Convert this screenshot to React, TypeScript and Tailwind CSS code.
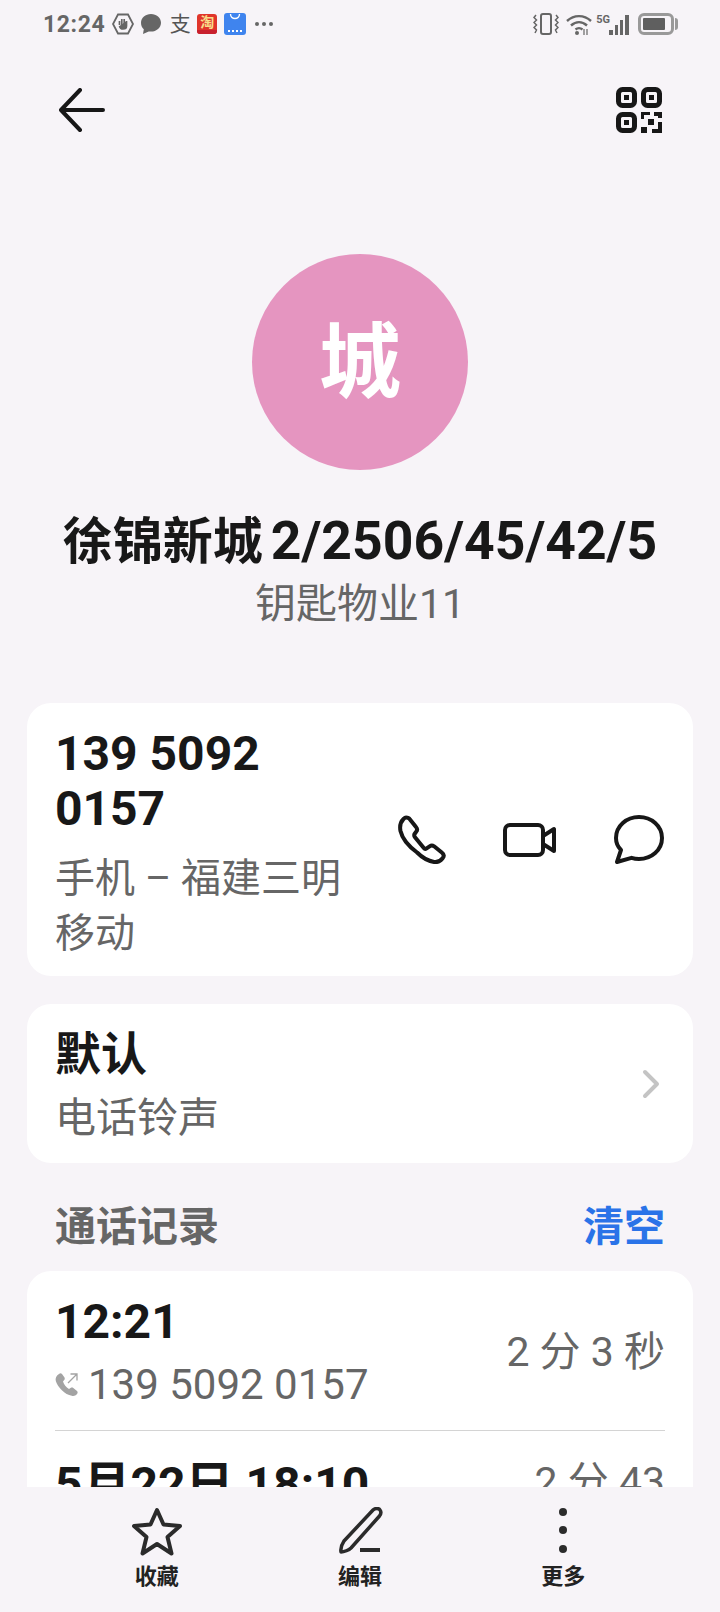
const font = { fontFamily: 'Roboto, "Noto Sans CJK SC", sans-serif' };

function StatusBar() {
  return (
    <div className="flex h-12 items-center justify-between pl-[43px] pr-[42px] text-[#666]">
      <div className="flex items-center gap-[7px]">
        <span className="text-[23px] font-bold leading-none tracking-[0.6px]">12:24</span>
        <svg width="22" height="22" viewBox="0 0 22 22" fill="none" stroke="#666" strokeWidth="1.800">
          <path d="M6 1.500h10l5 9.500-5 9.500H6L1 11z" />
          <path d="M7.500 8v4M9.800 6v6M12.200 6v6M14.500 8v5c0 2-1.500 3-3.500 3s-3-1-3.500-3" strokeWidth="1.700" fill="#666" />
        </svg>
        <svg width="20" height="20" viewBox="0 0 20 20" fill="#666">
          <path d="M10 0c5.500 0 10 3.800 10 8.800s-4.500 8.800-10 8.800c-.8 0-1.600-.1-2.300-.2L2 20l.8-4.700C1 13.700 0 11.400 0 8.800 0 3.800 4.500 0 10 0z" />
        </svg>
        <span className="ml-[1px] w-[22px] text-center text-[21px] leading-none text-[#555]">支</span>
        <div className="-ml-[1px] flex h-[20px] w-[20px] flex-col items-center justify-between overflow-hidden rounded-[3px] bg-[#e0352b] pt-[1px] text-[14px] font-bold leading-none text-[#f9dc8a]">
          淘
          <div className="h-[4px] w-full bg-[#c8202e]" />
        </div>
        <div className="flex h-[22px] w-[22px] flex-col items-center justify-between rounded-[3px] bg-[#3f84ee] pb-[3px]">
          <svg width="12" height="8" viewBox="0 0 12 8" fill="none" stroke="#fff" strokeWidth="1.400">
            <path d="M1.500 1c0 6 9 6 9 0" />
          </svg>
          <div className="flex gap-[2px]">
            <span className="h-[2px] w-[2px] bg-white" />
            <span className="h-[2px] w-[2px] bg-white" />
            <span className="h-[2px] w-[2px] bg-white" />
            <span className="h-[2px] w-[2px] bg-white" />
          </div>
        </div>
        <div className="ml-[2px] flex gap-[3px]">
          <span className="h-[4px] w-[4px] rounded-full bg-[#666]" />
          <span className="h-[4px] w-[4px] rounded-full bg-[#666]" />
          <span className="h-[4px] w-[4px] rounded-full bg-[#666]" />
        </div>
      </div>
      <div className="flex items-center">
        <svg width="26" height="22" viewBox="0 0 26 22" fill="none" stroke="#666" strokeWidth="2">
          <rect x="8" y="1" width="10" height="20" rx="2" />
          <path d="M3 2L1 4.500l2.500 2.500L1 9.500 3.500 12 1 14.500 3.500 17 2 20M23 2l2 2.500L22.500 7 25 9.500 22.500 12l2.500 2.500L22.500 17l1.500 3" strokeWidth="1.500" />
        </svg>
        <svg className="ml-[7px]" width="26" height="21" viewBox="0 0 26 21" fill="none" stroke="#666" strokeWidth="2.400">
          <path d="M1 7c7-6.500 17-6.500 24 0M5 11.500c5-4.500 11-4.500 16 0M9.500 15.500c2-1.700 5-1.700 7 0" />
          <circle cx="11" cy="19" r="2" fill="#666" stroke="none" />
          <path d="M18 15v6M21 15v6" strokeWidth="1.200" />
        </svg>
        <div className="ml-[4px] flex items-end">
          <span className="mb-[10px] text-[11px] font-bold leading-none">5G</span>
          <div className="-ml-px flex items-end gap-[2px]">
            <span className="h-[5px] w-[4px] bg-[#666]" />
            <span className="h-[10px] w-[3px] bg-[#666]" />
            <span className="h-[15px] w-[3px] bg-[#666]" />
            <span className="h-[20px] w-[4px] bg-[#666]" />
          </div>
        </div>
        <div className="ml-[9px] flex items-center gap-[1px]">
          <div className="flex h-[22px] w-[36px] items-center rounded-[6px] border-[3px] border-[#999] p-[2px]">
            <div className="h-full w-[22px] rounded-[1px] bg-[#5f5f5f]" />
          </div>
          <span className="h-[12px] w-[3px] rounded-r-sm bg-[#999]" />
        </div>
      </div>
    </div>
  );
}

function TopBar() {
  return (
    <div className="flex h-[124px] items-center justify-between pl-[59px] pr-[58px]">
      <svg width="46" height="44" viewBox="0 0 46 44" fill="none" stroke="#171717" strokeWidth="4" strokeLinecap="round" strokeLinejoin="round">
        <path d="M44 22H3M21 2L2 22l19 20" />
      </svg>
      <svg width="46" height="46" viewBox="0 0 46 46" fill="none">
        <rect x="2.500" y="2.500" width="16" height="16" rx="4" stroke="#171717" strokeWidth="5" />
        <rect x="27.500" y="2.500" width="16" height="16" rx="4" stroke="#171717" strokeWidth="5" />
        <rect x="2.500" y="27.500" width="16" height="16" rx="4" stroke="#171717" strokeWidth="5" />
        <rect x="8" y="8" width="5" height="5" fill="#171717" />
        <rect x="33" y="8" width="5" height="5" fill="#171717" />
        <rect x="8" y="33" width="5" height="5" fill="#171717" />
        <path d="M25 32v-7h9v3h-6v4zM38 25h8v6h-4v-2h-4zM25 40h6v6h-6zM46 35v11h-10v-4h6v-7zM32 32h6v6h-6z" fill="#171717" />
      </svg>
    </div>
  );
}

function Card({ children, className }: { children: React.ReactNode; className: string }) {
  return <div className={"mx-[27px] rounded-[24px] bg-white " + className}>{children}</div>;
}

function OutgoingIcon() {
  return (
    <svg width="24" height="24" viewBox="0 0 24 24" fill="none">
      <path d="M4 1c1-1 2-1 3 0l2.500 3.500c.5 1 .3 2-.5 2.800L8 8.500c1 3 3 5.500 6 7.500l1.500-1c1-.6 2-.6 2.800 0l3.700 3c1 1 .8 2.300-.2 3.200-1.300 1.500-3 2-5 1.500C10 22 2.500 14 .8 8 0 5.300 1.500 2.500 4 1z" fill="#a3a3a3" />
      <path d="M13 10l9-9M15.500 1H22v6.500" stroke="#a3a3a3" strokeWidth="1.300" />
    </svg>
  );
}

export default function App() {
  return (
    <div className="flex h-[1612px] w-[720px] flex-col overflow-hidden bg-[#f7f4f8]" style={font}>
      <div className="min-h-0 flex-1 overflow-hidden">
        <StatusBar />
        <TopBar />

        <div className="mt-[82px] flex justify-center">
          <div className="flex h-[216px] w-[216px] items-center justify-center rounded-full bg-[#e595c0] pt-[2px] text-[82px] font-bold text-white">城</div>
        </div>
        <div className="mt-[35px] text-center text-[50px] font-bold leading-[72px] text-[#181818]">
          徐锦新城<span className="ml-[8px] text-[53.500px]">2/2506/45/42/5</span>
        </div>
        <div className="text-center text-[41px] leading-[52px] text-[#666]">钥匙物业11</div>

        <Card className="mt-[73px] flex h-[273px] items-center justify-between pl-[28px] pr-[29px]">
          <div className="w-[300px] self-start pt-[23px]">
            <div className="text-[48px] font-bold leading-[55px] text-[#181818]">139 5092 0157</div>
            <div className="mt-[15px] text-[40px] leading-[55px] text-[#666]">手机 – 福建三明移动</div>
          </div>
          <div className="flex items-center gap-[57px]">
            <svg width="49" height="49" viewBox="0 0 49 49" fill="none" stroke="#171717" strokeWidth="4" strokeLinejoin="round">
              <path d="M9 2.500c1.500 0 3 .5 4 2l6 7.500c1.500 1.700 1.300 3.500 0 5l-1.500 2c-.5 1-.3 2 .3 3l9 11c.8 1 1.800 1 2.800.3l3-2c1.500-1 3-1 4.500 0l8 6.500c2 1.500 2 3.500.5 5.500-2 2.700-5 4.200-8.500 3.700-6-1-12-4.500-17-9.500C10 30 5 22.500 3.500 16c-1-5 0-9 3-12 .8-.8 1.500-1.500 2.500-1.500z" />
            </svg>
            <svg width="54" height="34" viewBox="0 0 54 34" fill="none" stroke="#171717" strokeWidth="4" strokeLinejoin="round">
              <rect x="2" y="2" width="38" height="30" rx="5" />
              <path d="M40 13l11-7v22l-11-7" />
            </svg>
            <svg width="50" height="49" viewBox="0 0 50 49" fill="none" stroke="#171717" strokeWidth="4" strokeLinejoin="round">
              <path d="M25 2c12.500 0 23 9 23 21s-10.500 21-23 21c-2.500 0-5-.4-7.500-1.200L3 47l4-12C4 32 2 28 2 23 2 11 12.500 2 25 2z" />
            </svg>
          </div>
        </Card>

        <Card className="mt-[28px] flex h-[159px] items-center justify-between pl-[28px] pr-[33px]">
          <div className="self-start pt-[22px]">
            <div className="text-[46px] font-bold leading-[56px] text-[#181818]">默认</div>
            <div className="mt-[10px] text-[41px] leading-[52px] text-[#666]">电话铃声</div>
          </div>
          <svg width="18" height="30" viewBox="0 0 18 30" fill="none" stroke="#c4c4c4" strokeWidth="4" strokeLinecap="round" strokeLinejoin="round">
            <path d="M3 3l12 12L3 27" />
          </svg>
        </Card>

        <div className="mt-[36px] flex items-center justify-between px-[55px]">
          <span className="text-[41px] font-bold leading-[56px] text-[#666]">通话记录</span>
          <span className="text-[41px] font-bold leading-[56px] text-[#2a73e8]">清空</span>
        </div>

        <Card className="mt-[16px] px-[28px] pb-[60px] pt-[23px]">
          <div className="flex items-center justify-between pb-[20px]">
            <div>
              <div className="text-[48px] font-bold leading-[56px] text-[#181818]">12:21</div>
              <div className="mt-[10px] flex items-center gap-[9px] text-[42px] leading-[50px] text-[#666]">
                <OutgoingIcon />
                139 5092 0157
              </div>
            </div>
            <div className="text-[41px] leading-[50px] text-[#666]">2 分 3 秒</div>
          </div>
          <div className="h-px bg-[#d4d4d4]" />
          <div className="flex items-start justify-between pt-[26px]">
            <div className="text-[48px] font-bold leading-[56px] text-[#181818]">5月22日 18:10</div>
            <div className="text-[41px] leading-[50px] text-[#666]">2 分 43</div>
          </div>
        </Card>
      </div>

      <div className="flex h-[125px] shrink-0 justify-around bg-[#f7f4f8] px-[55px] pt-[20px]">
        <div className="flex w-[100px] flex-col items-center">
          <svg width="50" height="50" viewBox="0 0 50 50" fill="none" stroke="#2b2b2b" strokeWidth="4" strokeLinejoin="round">
            <path d="M25 3l6.500 14.500 16.500 1.500-12.500 11 4 16.500L25 37l-14.500 9.500 4-16.500L2 19l16.500-1.500z" />
          </svg>
          <span className="mt-[5px] text-[22px] font-bold leading-[30px] text-[#222]">收藏</span>
        </div>
        <div className="flex w-[100px] flex-col items-center">
          <svg width="50" height="50" viewBox="0 0 50 50" fill="none" stroke="#2b2b2b" strokeWidth="3.500" strokeLinejoin="round">
            <path d="M38 3c2-2 6-2 7 0 1.500 2 1 4-.5 6L16 41c-2 2-7 4-10 4-.5-3 1-8 3-11z" />
            <path d="M25 43h20" strokeWidth="4" />
          </svg>
          <span className="mt-[5px] text-[22px] font-bold leading-[30px] text-[#222]">编辑</span>
        </div>
        <div className="flex w-[100px] flex-col items-center">
          <svg width="50" height="50" viewBox="0 0 50 50" fill="#2b2b2b">
            <circle cx="25" cy="5" r="4" />
            <circle cx="25" cy="23" r="4" />
            <circle cx="25" cy="42" r="4" />
          </svg>
          <span className="mt-[5px] text-[22px] font-bold leading-[30px] text-[#222]">更多</span>
        </div>
      </div>
    </div>
  );
}
